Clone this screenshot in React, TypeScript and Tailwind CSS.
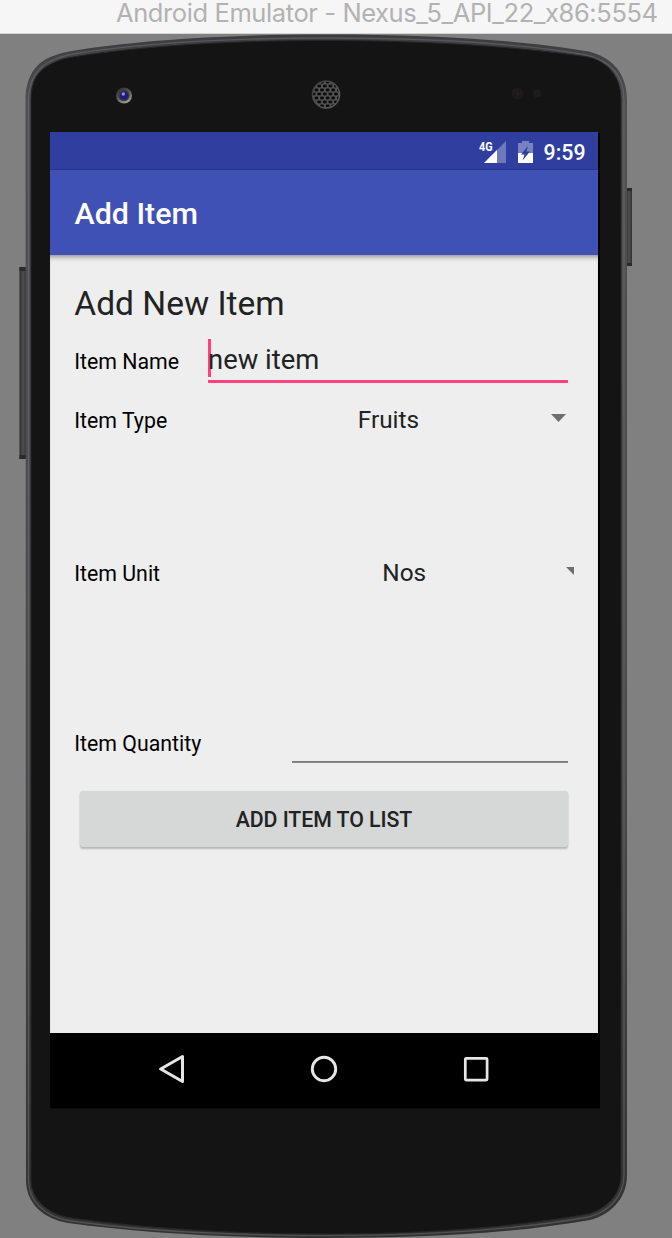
import React from "react";

function PhoneShell() {
  return (
    <svg
      className="absolute inset-0"
      width="672"
      height="1238"
      viewBox="0 0 672 1238"
      aria-hidden="true"
    >
      <defs>
        <linearGradient id="rim" x1="0" y1="0" x2="0" y2="1">
          <stop offset="0" stopColor="#3c3c3e" />
          <stop offset="0.06" stopColor="#505052" />
          <stop offset="0.6" stopColor="#4a4a4c" />
          <stop offset="1" stopColor="#323232" />
        </linearGradient>
        <linearGradient id="key" x1="0" y1="0" x2="1" y2="0">
          <stop offset="0" stopColor="#2c2c2c" />
          <stop offset="0.5" stopColor="#505050" />
          <stop offset="1" stopColor="#303030" />
        </linearGradient>
        <linearGradient id="ring" x1="0" y1="0" x2="0.6" y2="1">
          <stop offset="0" stopColor="#242424" />
          <stop offset="0.5" stopColor="#555250" />
          <stop offset="1" stopColor="#a09a98" />
        </linearGradient>
        <linearGradient id="grille" x1="0" y1="0" x2="1" y2="1">
          <stop offset="0" stopColor="#2e2e2e" />
          <stop offset="1" stopColor="#6a6a6a" />
        </linearGradient>
        <pattern id="mesh" x="1" width="5.6" height="8" patternUnits="userSpaceOnUse">
          <rect x="0" y="0.5" width="3.6" height="2.900" rx="0.8" fill="#090909" />
          <rect x="2.800" y="4.500" width="2.800" height="2.900" rx="0.8" fill="#090909" />
          <rect x="0" y="4.500" width="0.8" height="2.900" fill="#090909" />
        </pattern>
      </defs>
      <rect x="19.5" y="267" width="7" height="192" fill="url(#key)" />
      <rect x="19.5" y="267" width="7" height="4" fill="#2a2a2a" />
      <rect x="19.5" y="455" width="7" height="4" fill="#2a2a2a" />
      <rect x="626" y="188" width="6" height="78" fill="url(#key)" />
      <rect x="626" y="188" width="6" height="3" fill="#2a2a2a" />
      <rect x="626" y="263" width="6" height="3" fill="#2a2a2a" />
      <path
        d="M25.5 100C25.500 78 35 62 53 56C60 53 66 52 73 50.700C140 40 230 34.500 326 34.500C430 34.500 520 40 586 51C606 55 627 68 627 100V1175C627 1200 609 1215 590 1220C510 1234 420 1238 326 1238C230 1238 140 1233 68 1223C44 1219 26 1204 26 1180Z"
        fill="url(#rim)"
      />
      <path
        d="M28.500 100C28.500 80 38 66 53 60C60 57 66 55.500 73 54C140 43.500 230 38 326 38C430 38 520 43.500 584 54.500C605 59 624 71 624 100V1175C624 1198 607 1212 589 1217C510 1231 420 1235.500 326 1235.500C230 1235.500 140 1231 68 1220.500C45 1216 28.500 1202 28.500 1180Z"
        fill="none"
        stroke="#77777a"
        strokeOpacity="0.45"
        strokeWidth="1.3"
      />
      <path
        d="M31 100C31 80 38 70 53 63C60 59.500 66 58 73 57C140 46 230 40.500 326 40.500C430 40.500 520 47 588 57C606 61 621 75 621 100V1175C621 1195 606 1209 588 1214C510 1228 420 1234 326 1234C230 1234 140 1228 68 1217.500C47 1213 31 1199 31 1180Z"
        fill="#141414"
        stroke="#252527"
        strokeWidth="1"
      />
      <circle cx="124" cy="95.500" r="8" fill="url(#ring)" />
      <circle cx="124" cy="95.500" r="5.600" fill="#3c3a3c" />
      <circle cx="124" cy="95.500" r="4.200" fill="#1c1c80" />
      <circle cx="123.300" cy="94" r="1.800" fill="#8c8cb8" />
      <circle cx="326" cy="94.500" r="14.300" fill="url(#grille)" />
      <circle cx="326" cy="94.500" r="13.300" fill="#555" />
      <circle cx="326" cy="94.500" r="12.800" fill="url(#mesh)" />
      <circle cx="517.500" cy="93.500" r="6" fill="#1d1a1b" />
      <circle cx="518" cy="94" r="1.200" fill="#3a1c22" />
      <circle cx="537" cy="93.500" r="4" fill="#1f1b1c" />
      <rect x="51" y="133" width="549" height="975.500" fill="#000" />
    </svg>
  );
}

function StatusBar() {
  return (
    <div className="flex h-[38px] shrink-0 items-center justify-end bg-[#303f9f] pr-[12.500px] shadow-[inset_0_-1px_1px_#28358a]">
      <div className="flex items-center">
        <span className="mt-[-1px] w-[13px] origin-left scale-x-[0.8] self-start whitespace-nowrap text-[13.500px] font-bold leading-[14px] text-white">
          4G
        </span>
        <svg className="-ml-[8px] mt-px" width="22" height="22" viewBox="0 0 22 22">
          <path d="M22 0V22H0L13 9Z" fill="#fff" fillOpacity="0.3" />
          <path d="M13 9V22H0Z" fill="#fff" />
        </svg>
      </div>
      <svg className="ml-[12px] mt-px" width="15" height="22" viewBox="0 0 15 22">
        <path d="M4 0H11V2H15V12H0V2H4Z" fill="#fff" fillOpacity="0.35" />
        <path d="M0 12H15V22H0Z" fill="#fff" />
        <path d="M10 5L3 13.500H6.500L4.500 19.500L12 10.500H8.500Z" fill="#303f9f" />
      </svg>
      <span className="ml-[10.500px] mt-[4px] text-[21.300px] font-medium leading-[26px] text-white">9:59</span>
    </div>
  );
}

function Label({ children }: { children: React.ReactNode }) {
  return <span className="whitespace-nowrap text-[21.300px] text-black">{children}</span>;
}

function Form() {
  return (
    <main className="flex h-[778px] shrink-0 flex-col bg-[#eee] pl-[24.300px] text-[#212323] shadow-[inset_0_5px_5px_-3px_rgba(0,0,0,0.4)]">
      <h2 className="mt-[30px] h-[37px] text-[33.500px] leading-[37px]">Add New Item</h2>

      <div className="mt-[17px] flex h-[44px] justify-between pr-[30.500px] leading-[45px]">
        <Label>Item Name</Label>
        <div className="relative w-[359.500px] border-b-[3px] border-[#ff4081] text-[27.400px] leading-[43px]">
          <span className="absolute left-0 top-0 h-[38px] w-[3px] bg-[#ff4081]" />
          <span className="relative">new item</span>
        </div>
      </div>

      <div className="mt-[14px] flex h-[46px] items-center pr-[32px] leading-[46px]">
        <div className="w-[283.500px] pt-[3px]">
          <Label>Item Type</Label>
        </div>
        <span className="text-[24.350px] leading-[44px]">Fruits</span>
        <svg className="mb-[4px] ml-auto" width="15" height="8" viewBox="0 0 15 8">
          <path d="M0 0H15L7.500 8Z" fill="#6e6e6e" />
        </svg>
      </div>

      <div className="mt-[107px] flex h-[46px] items-center pr-[24px] leading-[46px]">
        <div className="w-[308px] pt-[3px]">
          <Label>Item Unit</Label>
        </div>
        <span className="text-[24.350px] leading-[44px]">Nos</span>
        <svg className="mb-[4px] ml-auto" width="8" height="8" viewBox="0 0 8 8">
          <path d="M0 0H8V8Z" fill="#6e6e6e" />
        </svg>
      </div>

      <div className="mt-[124px] flex h-[43px] justify-between pr-[30.500px] leading-[47px]">
        <Label>Item Quantity</Label>
        <div className="w-[276px] border-b border-[#8a8a8a] shadow-[0_-1px_0_#7a7a7a_inset]" />
      </div>

      <button className="ml-[5.700px] mt-[28px] h-[56px] w-[488px] rounded-[3px] bg-[#d6d7d7] pt-px text-[21.300px] font-medium leading-[56px] tracking-[-0.05px] shadow-[0_2px_2px_rgba(0,0,0,0.22),0_0_1px_rgba(0,0,0,0.12)]">
        ADD ITEM TO LIST
      </button>
    </main>
  );
}

function NavBar() {
  return (
    <nav className="flex h-[75px] w-[550px] shrink-0 items-center bg-black pl-[109px]">
      <svg width="26" height="30" viewBox="0 0 26 30" className="mb-[3px]">
        <path d="M1.700 15L23.500 2.500V27.500Z" fill="none" stroke="#e6e6e6" strokeWidth="3" strokeLinejoin="round" />
      </svg>
      <svg width="28" height="28" viewBox="0 0 28 28" className="mb-[3px] ml-[125px]">
        <circle cx="14" cy="14" r="11.700" fill="none" stroke="#e6e6e6" strokeWidth="2.900" />
      </svg>
      <svg width="26" height="26" viewBox="0 0 26 26" className="mb-[3px] ml-[125px]">
        <rect x="2.300" y="2.300" width="21.800" height="21.800" rx="1" fill="none" stroke="#e6e6e6" strokeWidth="2.700" />
      </svg>
    </nav>
  );
}

export default function App() {
  return (
    <div className="relative h-[1238px] w-[672px] overflow-hidden bg-[#808080] font-['Roboto',sans-serif]">
      <PhoneShell />
      <div className="relative flex h-full flex-col">
        <header className="h-[34px] shrink-0 border-b border-[#d4d6d4] bg-[#f6f6f6] pl-[116px] font-['Inter',sans-serif] text-[25.500px] leading-[26px] tracking-[-0.4px] text-[#b2b2b2]">
          <span className="whitespace-nowrap">Android Emulator - Nexus_5_API_22_x86:5554</span>
        </header>
        <div className="ml-[50px] mt-[98px] flex w-[548px] flex-col">
          <StatusBar />
          <div className="flex h-[85px] shrink-0 items-center bg-[#3f51b5] pl-[24.500px] pt-[3px]">
            <h1 className="text-[30.400px] font-medium leading-[36px] text-white">Add Item</h1>
          </div>
          <Form />
          <NavBar />
        </div>
      </div>
    </div>
  );
}
